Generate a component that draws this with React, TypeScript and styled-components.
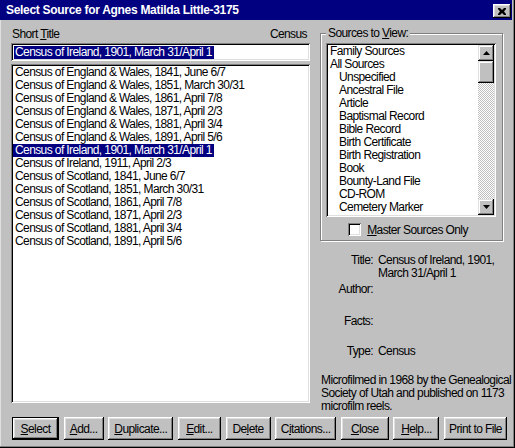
import React from 'react';
import styled, { createGlobalStyle } from 'styled-components';

const censusTitles = [
  'Census of England & Wales, 1841, June 6/7',
  'Census of England & Wales, 1851, March 30/31',
  'Census of England & Wales, 1861, April 7/8',
  'Census of England & Wales, 1871, April 2/3',
  'Census of England & Wales, 1881, April 3/4',
  'Census of England & Wales, 1891, April 5/6',
  'Census of Ireland, 1901, March 31/April 1',
  'Census of Ireland, 1911, April 2/3',
  'Census of Scotland, 1841, June 6/7',
  'Census of Scotland, 1851, March 30/31',
  'Census of Scotland, 1861, April 7/8',
  'Census of Scotland, 1871, April 2/3',
  'Census of Scotland, 1881, April 3/4',
  'Census of Scotland, 1891, April 5/6',
];

const sourceTypes = [
  { label: 'Family Sources', indent: false },
  { label: 'All Sources', indent: false },
  { label: 'Unspecified', indent: true },
  { label: 'Ancestral File', indent: true },
  { label: 'Article', indent: true },
  { label: 'Baptismal Record', indent: true },
  { label: 'Bible Record', indent: true },
  { label: 'Birth Certificate', indent: true },
  { label: 'Birth Registration', indent: true },
  { label: 'Book', indent: true },
  { label: 'Bounty-Land File', indent: true },
  { label: 'CD-ROM', indent: true },
  { label: 'Cemetery Marker', indent: true },
];

const buttons: { pre: string; key: string; post: string; width: number; isDefault?: boolean }[] = [
  { pre: '', key: 'S', post: 'elect', width: 47, isDefault: true },
  { pre: '', key: 'A', post: 'dd...', width: 40 },
  { pre: '', key: 'D', post: 'uplicate...', width: 65 },
  { pre: '', key: 'E', post: 'dit...', width: 43 },
  { pre: 'De', key: 'l', post: 'ete', width: 45 },
  { pre: 'C', key: 'i', post: 'tations...', width: 61 },
  { pre: '', key: 'C', post: 'lose', width: 48 },
  { pre: '', key: 'H', post: 'elp...', width: 46 },
  { pre: 'Print to File', key: '', post: '', width: 63 },
];

const GlobalStyle = createGlobalStyle`
  html, body {
    margin: 0;
    padding: 0;
    background: #c0c0c0;
  }
  * {
    box-sizing: border-box;
  }
`;

const Window = styled.div`
  width: 515px;
  height: 448px;
  background: #c0c0c0;
  font-family: 'Liberation Sans', Arial, sans-serif;
  font-size: 12px;
  letter-spacing: -0.6px;
  color: #000;
  box-shadow: inset -1px -1px #000, inset -2px -2px #808080, inset 1px 0 #dfdfdf;
  overflow: hidden;
`;

const TitleBar = styled.div`
  height: 20px;
  margin-right: 3px;
  background: #000080;
  display: flex;
  align-items: center;
  justify-content: space-between;
  padding: 0 1px 0 6px;
`;

const TitleText = styled.span`
  color: #fff;
  font-weight: bold;
  font-size: 12px;
  letter-spacing: -0.3px;
`;

const CloseBox = styled.div`
  width: 18px;
  height: 14px;
  margin-top: 2px;
  background: #c0c0c0;
  display: flex;
  align-items: center;
  justify-content: center;
  box-shadow: inset -1px -1px #000, inset 1px 1px #fff, inset -2px -2px #808080, inset 2px 2px #dfdfdf;
`;

const Content = styled.div`
  display: grid;
  grid-template-columns: 299px 183px;
  column-gap: 10px;
  height: 393px;
  padding: 7px 0 0 11px;
`;

const LeftColumn = styled.div`
  display: flex;
  flex-direction: column;
`;

const LabelRow = styled.div`
  display: flex;
  justify-content: space-between;
  height: 14px;
  line-height: 14px;
  padding: 0 3px 0 1px;
  margin-bottom: 2px;
`;

const Key = styled.span`
  text-decoration: underline;
  text-underline-offset: 1px;
`;

const Sunken = styled.div`
  background: #fff;
  box-shadow: inset 1px 1px #808080, inset -1px -1px #fff, inset 2px 2px #000, inset -2px -2px #dfdfdf;
`;

const TextField = styled(Sunken)`
  height: 18px;
  padding: 3px 0 0 3px;
  line-height: 12px;
`;

const Highlight = styled.span`
  display: inline-block;
  background: #000080;
  color: #fff;
  line-height: 13px;
  padding: 0 2px 0 1px;
`;

const TitleList = styled(Sunken)`
  margin-top: 3px;
  height: 339px;
  padding: 2px;
`;

const ListRow = styled.div<{ $selected?: boolean }>`
  height: 13px;
  line-height: 13px;
  white-space: nowrap;
  span {
    display: inline-block;
    padding: 0 2px;
    background: ${({ $selected }) => ($selected ? '#000080' : 'transparent')};
    color: ${({ $selected }) => ($selected ? '#fff' : '#000')};
  }
`;

const RightColumn = styled.div`
  display: flex;
  flex-direction: column;
`;

const Group = styled.div`
  position: relative;
  margin-top: 6px;
  height: 208px;
  border: 1px solid #808080;
  box-shadow: inset 1px 1px #fff, 1px 1px #fff;
  padding: 9px 6px 0 5px;
`;

const Legend = styled.span`
  position: absolute;
  top: -7px;
  left: 5px;
  padding: 0 2px;
  line-height: 13px;
  background: #c0c0c0;
`;

const SourceList = styled(Sunken)`
  height: 174px;
  padding: 2px;
  display: flex;
`;

const SourceItems = styled.div`
  flex: 1;
  padding-left: 2px;
  overflow: hidden;
`;

const SourceRow = styled.div<{ $indent: boolean }>`
  height: 13px;
  line-height: 13px;
  padding-left: ${({ $indent }) => ($indent ? '9px' : '0')};
  white-space: nowrap;
`;

const ScrollBar = styled.div`
  width: 16px;
  display: flex;
  flex-direction: column;
  background: repeating-conic-gradient(#c0c0c0 0 25%, #fff 0 50%) 0 0 / 2px 2px;
`;

const ScrollButton = styled.div<{ $h: number }>`
  height: ${({ $h }) => $h}px;
  background: #c0c0c0;
  display: flex;
  align-items: center;
  justify-content: center;
  box-shadow: inset -1px -1px #000, inset 1px 1px #dfdfdf, inset -2px -2px #808080, inset 2px 2px #fff;
`;

const Track = styled.div`
  flex: 1;
`;

const CheckRow = styled.div`
  display: flex;
  align-items: center;
  justify-content: center;
  gap: 6px;
  margin-top: 6px;
  height: 13px;
  padding-right: 6px;
`;

const CheckBox = styled(Sunken)`
  width: 13px;
  height: 13px;
`;

const Details = styled.div`
  display: grid;
  grid-template-columns: 53px 1fr;
  column-gap: 5px;
  margin-top: 13px;
`;

const DetailLabel = styled.div<{ $h: number }>`
  text-align: right;
  height: ${({ $h }) => $h}px;
  line-height: 13px;
`;

const DetailValue = styled.div`
  line-height: 13px;
  padding-right: 8px;
`;

const Note = styled.div`
  width: 200px;
  margin-left: 1px;
  line-height: 13px;
  white-space: nowrap;
`;

const ButtonBar = styled.div`
  display: flex;
  justify-content: space-between;
  width: 495px;
  margin: 4px 0 0 12px;
`;

const Button = styled.div<{ $width: number; $default?: boolean }>`
  width: ${({ $width }) => $width}px;
  height: 23px;
  display: flex;
  align-items: center;
  justify-content: center;
  background: #c0c0c0;
  white-space: nowrap;
  border: ${({ $default }) => ($default ? '1px solid #000' : 'none')};
  box-shadow: inset -1px -1px #000, inset 1px 1px #fff, inset -2px -2px #808080, inset 2px 2px #dfdfdf;
`;

const Arrow: React.FC<{ down?: boolean }> = ({ down }) => (
  <svg width="7" height="4" viewBox="0 0 7 4">
    <path d={down ? 'M0 0h7L3.5 4z' : 'M3.5 0L7 4H0z'} fill="#000" />
  </svg>
);

const App: React.FC = () => {
  return (
    <>
      <GlobalStyle />
      <Window>
        <TitleBar>
          <TitleText>Select Source for Agnes Matilda Little-3175</TitleText>
          <CloseBox>
            <svg width="8" height="7" viewBox="0 0 8 7">
              <path d="M0 0h2l2 2 2-2h2v1L6 3.5 8 6v1H6L4 5 2 7H0V6l2-2.5L0 1z" fill="#000" />
            </svg>
          </CloseBox>
        </TitleBar>

        <Content>
          <LeftColumn>
            <LabelRow>
              <span>Short <Key>T</Key>itle</span>
              <span>Census</span>
            </LabelRow>
            <TextField>
              <Highlight>Census of Ireland, 1901, March 31/April 1</Highlight>
            </TextField>
            <TitleList>
              {censusTitles.map((title, i) => (
                <ListRow key={title} $selected={i === 6}>
                  <span>{title}</span>
                </ListRow>
              ))}
            </TitleList>
          </LeftColumn>

          <RightColumn>
            <Group>
              <Legend>Sources to <Key>V</Key>iew:</Legend>
              <SourceList>
                <SourceItems>
                  {sourceTypes.map((s) => (
                    <SourceRow key={s.label} $indent={s.indent}>{s.label}</SourceRow>
                  ))}
                </SourceItems>
                <ScrollBar>
                  <ScrollButton $h={16}><Arrow /></ScrollButton>
                  <ScrollButton $h={22} />
                  <Track />
                  <ScrollButton $h={16}><Arrow down /></ScrollButton>
                </ScrollBar>
              </SourceList>
              <CheckRow>
                <CheckBox />
                <span><Key>M</Key>aster Sources Only</span>
              </CheckRow>
            </Group>

            <Details>
              <DetailLabel $h={29}>Title:</DetailLabel>
              <DetailValue>Census of Ireland, 1901, March 31/April 1</DetailValue>
              <DetailLabel $h={32}>Author:</DetailLabel>
              <DetailValue />
              <DetailLabel $h={30}>Facts:</DetailLabel>
              <DetailValue />
              <DetailLabel $h={29}>Type:</DetailLabel>
              <DetailValue>Census</DetailValue>
            </Details>

            <Note>
              Microfilmed in 1968 by the Genealogical<br />
              Society of Utah and published on 1173<br />
              microfilm reels.
            </Note>
          </RightColumn>
        </Content>

        <ButtonBar>
          {buttons.map((b) => (
            <Button key={b.pre + b.key + b.post} $width={b.width} $default={b.isDefault}>
              {b.pre}
              {b.key && <Key>{b.key}</Key>}
              {b.post}
            </Button>
          ))}
        </ButtonBar>
      </Window>
    </>
  );
};

export default App;
